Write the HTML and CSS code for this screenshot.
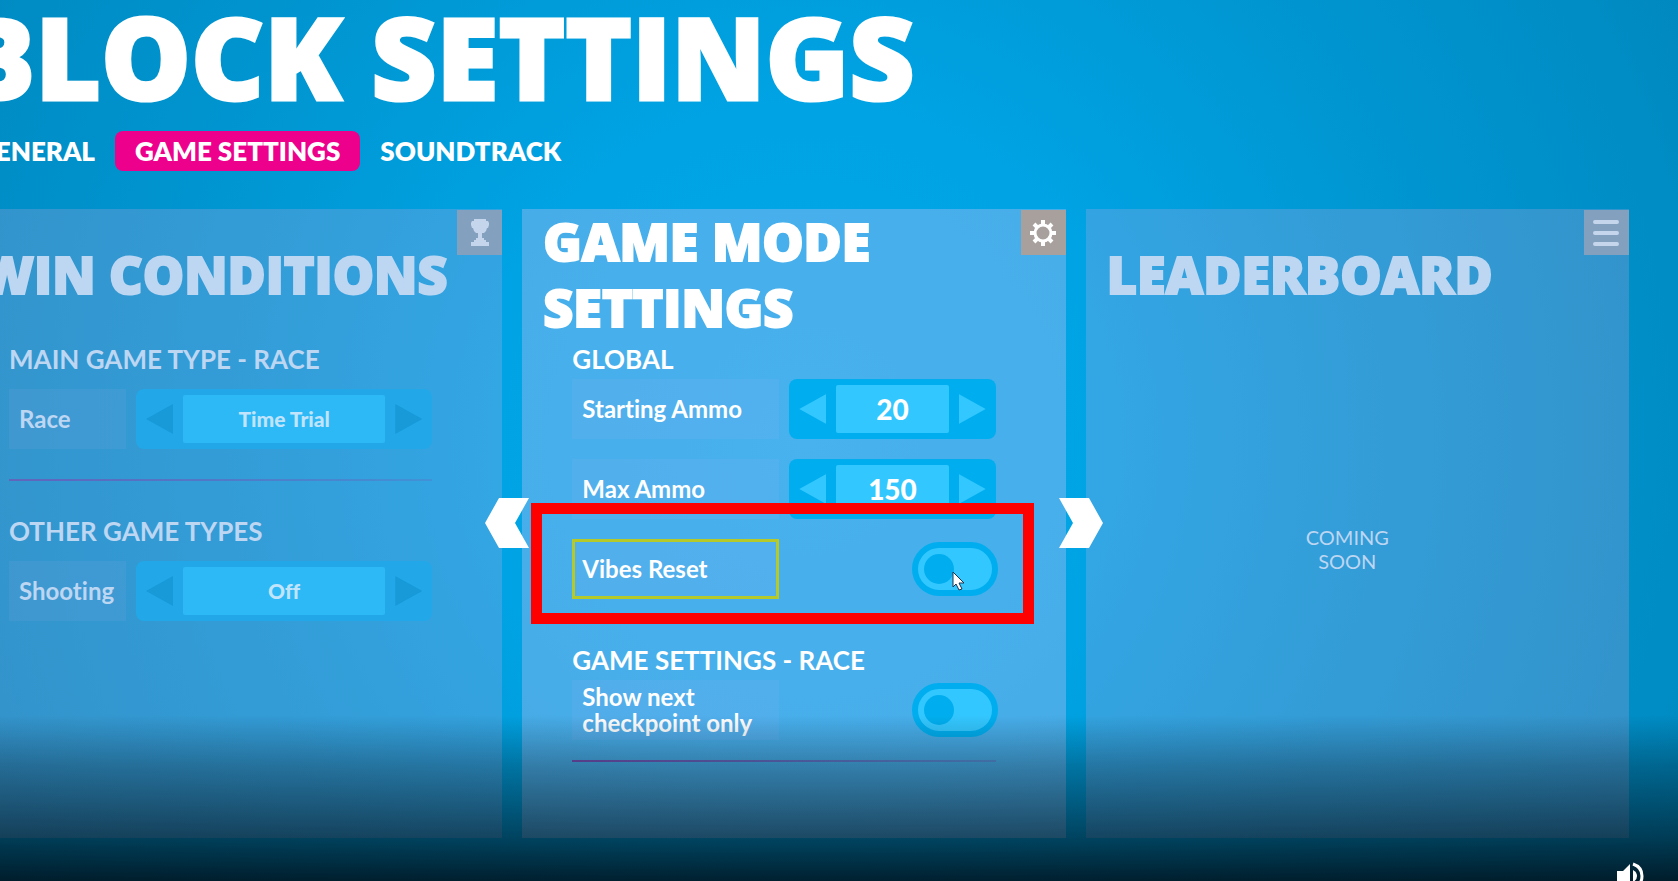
FILE: index.html
```html
<!DOCTYPE html>
<html lang="en">

<head>
    <meta charset="UTF-8">
    <meta name="viewport" content="width=device-width, initial-scale=1.0">
    <title>Block Settings</title>
    <link rel="stylesheet" href="styles.css">
</head>

<body>
    <div class="screen">
        <h1>BLOCK SETTINGS</h1>

        <nav class="tabs">
            <button class="tab">GENERAL</button>
            <button class="tab active">GAME SETTINGS</button>
            <button class="tab">SOUNDTRACK</button>
        </nav>

        <main class="panels">
            <section class="panel dimmed">
                <div class="badge">
                    <svg viewBox="0 0 18 27" width="18" height="27"><path d="M3 0H15V2H17L18 4V6L17 9H16L15 12L13 14H11V19H13V21H15V23H18V27H0V23H3V21H5V19H7V14H5L3 12L2 9H1L0 6V4L1 2H3Z" /></svg>
                </div>
                <h2>WIN CONDITIONS</h2>
                <div class="rows">
                    <h3>MAIN GAME TYPE - RACE</h3>
                    <div class="row">
                        <span class="label">Race</span>
                        <div class="stepper">
                            <button class="arrow prev" aria-label="Previous race type"></button>
                            <output>Time Trial</output>
                            <button class="arrow next" aria-label="Next race type"></button>
                        </div>
                    </div>
                    <hr>
                    <h3>OTHER GAME TYPES</h3>
                    <div class="row">
                        <span class="label">Shooting</span>
                        <div class="stepper">
                            <button class="arrow prev" aria-label="Previous shooting mode"></button>
                            <output>Off</output>
                            <button class="arrow next" aria-label="Next shooting mode"></button>
                        </div>
                    </div>
                </div>
            </section>

            <section class="panel">
                <div class="badge">
                    <svg viewBox="0 0 26 26" width="26" height="26">
                        <circle class="ring" cx="13" cy="13" r="8" />
                        <path class="teeth" d="M13 0V5M13 21V26M0 13H5M21 13H26M4 4L7 7M19 19L22 22M22 4L19 7M7 19L4 22" />
                    </svg>
                </div>
                <h2>GAME MODE SETTINGS</h2>
                <div class="rows">
                    <h3>GLOBAL</h3>
                    <div class="row">
                        <span class="label">Starting Ammo</span>
                        <div class="stepper">
                            <button class="arrow prev" aria-label="Less starting ammo"></button>
                            <output>20</output>
                            <button class="arrow next" aria-label="More starting ammo"></button>
                        </div>
                    </div>
                    <div class="row">
                        <span class="label">Max Ammo</span>
                        <div class="stepper">
                            <button class="arrow prev" aria-label="Less max ammo"></button>
                            <output>150</output>
                            <button class="arrow next" aria-label="More max ammo"></button>
                        </div>
                    </div>
                    <div class="row marked">
                        <label class="label focused" for="vibes">Vibes Reset</label>
                        <input class="toggle" type="checkbox" id="vibes">
                        <svg class="cursor" viewBox="0 0 14 21" width="14" height="21"><path d="M1 1V16L4 13L7 19L10 18L7 12H12Z" /></svg>
                    </div>
                    <h3>GAME SETTINGS - RACE</h3>
                    <div class="row">
                        <label class="label" for="checkpoint">Show next checkpoint only</label>
                        <input class="toggle" type="checkbox" id="checkpoint">
                    </div>
                    <hr>
                </div>
                <button class="slide slide-prev" aria-label="Previous panel">
                    <svg viewBox="0 0 44 50" width="44" height="50"><path d="M14 0H44L30 25L44 50H14L0 25Z" /></svg>
                </button>
                <button class="slide slide-next" aria-label="Next panel">
                    <svg viewBox="0 0 44 50" width="44" height="50"><path d="M30 0H0L14 25L0 50H30L44 25Z" /></svg>
                </button>
            </section>

            <section class="panel dimmed">
                <div class="badge">
                    <svg viewBox="0 0 26 26" width="26" height="26"><path class="bars" d="M2 2H24M2 13H24M2 24H24" /></svg>
                </div>
                <h2>LEADERBOARD</h2>
                <p class="soon">COMING<br>SOON</p>
            </section>
        </main>

        <div class="shade"></div>
        <button class="volume" aria-label="Volume">
            <svg viewBox="0 0 28 28" width="28" height="28">
                <path d="M0 9H6L13 2V26L6 19H0Z" />
                <path d="M16 8Q20 10 20 14T16 20Z" />
                <path class="wave" d="M16 2Q25 5 25 14T16 26" />
            </svg>
        </button>
    </div>
</body>

</html>
```
FILE: styles.css
```css
* {
    box-sizing: border-box;
}

body {
    margin: 0;
    font-family: Lato, "Open Sans", sans-serif;
    font-variant-ligatures: none;
    color: white;
}

h1, h2, h3, p {
    margin: 0;
}

button {
    border: none;
    background: none;
    padding: 0;
    font: inherit;
    color: inherit;
}

svg {
    display: block;
    fill: currentColor;
}

.screen {
    position: relative;
    min-height: 100vh;
    padding: 0 49px 43px 0;
    overflow: hidden;
    background: radial-gradient(circle at 48% 50%, #00a9ea 0%, #00a4e5 32%, #0097d3 62%, #0089c0 100%);
}

h1 {
    margin-left: -41px;
    height: 131px;
    font-family: "Open Sans", sans-serif;
    font-size: 113px;
    line-height: 112px;
    font-weight: 800;
    white-space: nowrap;
    -webkit-text-stroke: 3px;
}

.tabs {
    display: flex;
    height: 78px;
    margin-left: -43px;
    align-items: flex-start;
}

.tab {
    height: 40px;
    padding: 0 20px;
    border-radius: 8px;
    font-size: 26px;
    font-weight: 800;
    white-space: nowrap;
}

.tab.active {
    background: #ed008c;
}

.panels {
    display: grid;
    grid-template-columns: repeat(3, 1fr);
    gap: 20px;
    margin-left: -41px;
    min-height: 629px;
}

.panel {
    position: relative;
    background: rgba(255, 200, 248, 0.28);
}

.panel.dimmed {
    background: rgba(255, 175, 225, 0.2);
}

.badge {
    position: absolute;
    top: 1px;
    right: 0;
    width: 45px;
    height: 45px;
    display: flex;
    align-items: center;
    justify-content: center;
    background: #a8a09d;
}

.dimmed .badge {
    background: #84a0bf;
    color: #c5d6ec;
}

.ring {
    fill: none;
    stroke: currentColor;
    stroke-width: 3;
}

.teeth {
    stroke: currentColor;
    stroke-width: 4;
}

.bars {
    stroke: currentColor;
    stroke-width: 4;
    stroke-linecap: round;
}

h2 {
    height: 130px;
    margin-bottom: 2px;
    padding: 0 45px 0 21px;
    display: flex;
    align-items: center;
    font-family: "Open Sans", sans-serif;
    font-size: 52px;
    line-height: 66px;
    font-weight: 800;
    -webkit-text-stroke: 2px;
}

.dimmed h2 {
    padding-right: 0;
    white-space: nowrap;
}

.dimmed h2, .dimmed h3, .dimmed .label, .soon {
    color: #bdd6f2;
}

.rows {
    padding: 0 70px 0 50px;
}

h3 {
    height: 38px;
    font-size: 26px;
    line-height: 36px;
    font-weight: 700;
    white-space: nowrap;
}

.dimmed h3 {
    height: 48px;
}

.row {
    position: relative;
    display: flex;
    align-items: center;
    justify-content: space-between;
    gap: 10px;
    height: 60px;
    margin-bottom: 20px;
}

.label {
    display: flex;
    align-items: center;
    width: 207px;
    height: 60px;
    padding: 0 10px;
    font-size: 24px;
    line-height: 26px;
    font-weight: 700;
    background: rgba(255, 190, 255, 0.06);
}

.dimmed .label {
    width: 117px;
}

.label.focused {
    border: 3px solid #b5c92b;
    padding: 0 7px;
}

.stepper {
    display: flex;
    flex: 1;
    gap: 10px;
    align-items: center;
    height: 60px;
    padding: 0 10px;
    border-radius: 8px;
    background: #00aeef;
}

.stepper output {
    flex: 1;
    height: 48px;
    border-radius: 2px;
    background: #33c7ff;
    font-size: 28px;
    line-height: 48px;
    font-weight: 900;
    text-align: center;
}

.arrow {
    width: 27px;
    height: 30px;
    background: #33c7ff;
}

.prev {
    clip-path: polygon(100% 0, 100% 100%, 0 50%);
}

.next {
    clip-path: polygon(0 0, 100% 50%, 0 100%);
}

.dimmed .stepper {
    background: #22a8e8;
}

.dimmed output {
    background: #2db8f6;
    color: #c0e4fb;
    font-size: 21px;
}

.dimmed .arrow {
    background: #1899d8;
}

.toggle {
    appearance: none;
    width: 86px;
    height: 54px;
    margin: 0 -2px 0 0;
    padding: 6px;
    border: 6px solid #00aeef;
    border-radius: 27px;
    background: #33c7ff;
}

.toggle::before {
    content: "";
    display: block;
    width: 30px;
    height: 30px;
    border-radius: 50%;
    background: #00aeef;
}

.toggle:checked::before {
    margin-left: auto;
}

.marked {
    margin-bottom: 43px;
}

/* red frame around the highlighted setting */
.marked::after {
    content: "";
    position: absolute;
    inset: -36px -38px -25px -41px;
    border: 11px solid #ff0000;
    pointer-events: none;
}

.cursor {
    position: absolute;
    top: 32px;
    right: 30px;
    fill: white;
    stroke: #1b3550;
}

hr {
    height: 2px;
    margin: 0;
    border: none;
    background: linear-gradient(to right, #7450b4, rgba(116, 80, 180, 0.3));
}

.dimmed hr {
    margin: 30px 0 32px;
    opacity: 0.7;
}

.soon {
    padding: 184px 20px 0 0;
    font-size: 20px;
    line-height: 24px;
    text-align: center;
}

.slide {
    position: absolute;
    top: 289px;
    z-index: 1;
}

.slide-prev {
    left: -37px;
}

.slide-next {
    right: -37px;
}

.shade {
    position: absolute;
    inset: auto 0 0 0;
    height: 166px;
    pointer-events: none;
    background: linear-gradient(to bottom, rgba(0, 8, 14, 0) 0%, rgba(0, 8, 14, 0.28) 30%, rgba(0, 8, 14, 0.6) 74%, rgba(0, 8, 14, 0.84) 100%);
}

.volume {
    position: absolute;
    right: 33px;
    bottom: -9px;
}

.wave {
    fill: none;
    stroke: currentColor;
    stroke-width: 3;
}
```
